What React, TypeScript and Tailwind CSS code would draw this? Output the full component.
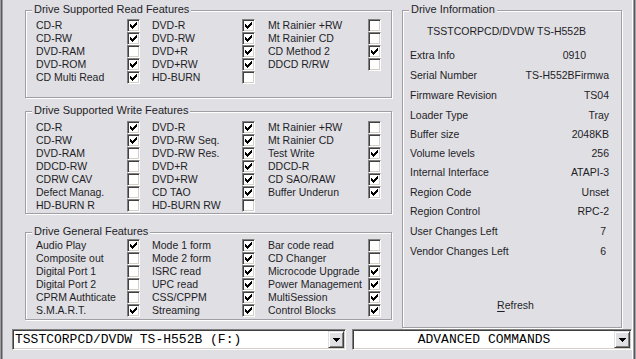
import React from 'react';

type Feature = [string, boolean];

const readFeatures: Feature[][] = [
  [['CD-R', true], ['DVD-R', true], ['Mt Rainier +RW', false]],
  [['CD-RW', true], ['DVD-RW', true], ['Mt Rainier CD', false]],
  [['DVD-RAM', false], ['DVD+R', true], ['CD Method 2', true]],
  [['DVD-ROM', true], ['DVD+RW', true], ['DDCD R/RW', false]],
  [['CD Multi Read', true], ['HD-BURN', false]],
];

const writeFeatures: Feature[][] = [
  [['CD-R', true], ['DVD-R', true], ['Mt Rainier +RW', false]],
  [['CD-RW', true], ['DVD-RW Seq.', true], ['Mt Rainier CD', false]],
  [['DVD-RAM', false], ['DVD-RW Res.', true], ['Test Write', true]],
  [['DDCD-RW', false], ['DVD+R', true], ['DDCD-R', false]],
  [['CDRW CAV', false], ['DVD+RW', true], ['CD SAO/RAW', true]],
  [['Defect Manag.', false], ['CD TAO', true], ['Buffer Underun', true]],
  [['HD-BURN R', false], ['HD-BURN RW', false]],
];

const generalFeatures: Feature[][] = [
  [['Audio Play', true], ['Mode 1 form', true], ['Bar code read', false]],
  [['Composite out', false], ['Mode 2 form', true], ['CD Changer', false]],
  [['Digital Port 1', false], ['ISRC read', true], ['Microcode Upgrade', true]],
  [['Digital Port 2', false], ['UPC read', true], ['Power Management', true]],
  [['CPRM Authticate', false], ['CSS/CPPM', true], ['MultiSession', true]],
  [['S.M.A.R.T.', true], ['Streaming', true], ['Control Blocks', true]],
];

// label, value, row height class, extra value padding
const driveInfo: [string, string, string, string][] = [
  ['Extra Info', '0910', 'h-[21px]', 'pr-[23px]'],
  ['Serial Number', 'TS-H552BFirmwa', 'h-[20px]', ''],
  ['Firmware Revision', 'TS04', 'h-[20px]', ''],
  ['Loader Type', 'Tray', 'h-[19px]', ''],
  ['Buffer size', '2048KB', 'h-[19px]', ''],
  ['Volume levels', '256', 'h-[19px]', ''],
  ['Internal Interface', 'ATAPI-3', 'h-[20px]', ''],
  ['Region Code', 'Unset', 'h-[19px]', ''],
  ['Region Control', 'RPC-2', 'h-[20px]', ''],
  ['User Changes Left', '7', 'h-[20px]', 'pr-[3px]'],
  ['Vendor Changes Left', '6', 'h-[20px]', 'pr-[3px]'],
];

const font = "font-['Liberation_Sans',Arial,sans-serif]";
const sunken =
  'border border-t-[#808080] border-l-[#808080] border-r-white border-b-white shadow-[inset_1px_1px_0_#404040,inset_-1px_-1px_0_#d4d0c8]';
const etched = 'border border-[#a0a0a4] shadow-[inset_1px_1px_0_#fff,1px_1px_0_#fff]';

const CheckBox: React.FC<{ checked: boolean }> = ({ checked }) => (
  <div className={`relative w-[13px] h-[13px] bg-white ${sunken}`}>
    {checked && (
      <svg className="absolute left-[2px] top-[2px]" width="7" height="7" viewBox="0 0 7 7" shapeRendering="crispEdges">
        {[[0, 2], [1, 3], [2, 4], [3, 3], [4, 2], [5, 1], [6, 0]].map(([x, y]) => (
          <rect key={x} x={x} y={y} width="1" height="3" fill="#000" />
        ))}
      </svg>
    )}
  </div>
);

const GroupBox: React.FC<{ title: string; className: string; children: React.ReactNode }> = ({
  title,
  className,
  children,
}) => (
  <div className={`relative ${etched} ${className}`}>
    <span className="absolute left-[6px] -top-[8px] px-[2px] bg-[#e0dfe3] text-[11px] leading-[13px] text-[#1e1e28]">
      {title}
    </span>
    {children}
  </div>
);

const FeatureGrid: React.FC<{ rows: Feature[][] }> = ({ rows }) => (
  <div className="pl-[10px] text-[10.5px] leading-[13px] text-[#1e1e28]">
    {rows.map((row, i) => (
      <div key={i} className="grid grid-cols-[91px_25px_90px_26px_100px_13px] h-[13px] items-center">
        {row.map(([label, checked]) => (
          <React.Fragment key={label}>
            <span className="whitespace-nowrap">{label}</span>
            <CheckBox checked={checked} />
          </React.Fragment>
        ))}
      </div>
    ))}
  </div>
);

const ComboBox: React.FC<{ text: string; className: string; center?: boolean }> = ({ text, className, center }) => (
  <div className={`flex h-[21px] bg-white p-[1px] ${sunken} ${className}`}>
    <div
      className={`flex-1 flex items-center font-['Liberation_Mono','Courier_New',monospace] text-[13px] text-black whitespace-pre ${
        center ? 'justify-center' : 'pl-[1px]'
      }`}
    >
      {text}
    </div>
    <div className="w-[16px] h-full flex items-center justify-center bg-[#e0dfe3] border border-t-[#e0dfe3] border-l-[#e0dfe3] border-r-[#404040] border-b-[#404040] shadow-[inset_1px_1px_0_#fff,inset_-1px_-1px_0_#808080]">
      <svg width="7" height="4" viewBox="0 0 7 4" shapeRendering="crispEdges">
        <rect x="0" y="0" width="7" height="1" fill="#000" />
        <rect x="1" y="1" width="5" height="1" fill="#000" />
        <rect x="2" y="2" width="3" height="1" fill="#000" />
        <rect x="3" y="3" width="1" height="1" fill="#000" />
      </svg>
    </div>
  </div>
);

export default function App() {
  return (
    <div className={`flex w-[636px] h-[359px] bg-[#e0dfe3] overflow-hidden ${font}`}>
      <div className="w-[3px] h-full bg-[#5a5a5e] border-l border-l-[#9d9da1] border-r border-r-[#9d9da1]" />

      <div className="flex flex-col w-[629px]">
        <div className="flex pt-[10px] pl-[22px] gap-[10px]">
          <div className="flex flex-col w-[367px]">
            <GroupBox title="Drive Supported Read Features" className="h-[88px] pt-[8px]">
              <FeatureGrid rows={readFeatures} />
            </GroupBox>
            <GroupBox title="Drive Supported Write Features" className="h-[103px] mt-[13px] pt-[9px]">
              <FeatureGrid rows={writeFeatures} />
            </GroupBox>
            <GroupBox title="Drive General Features" className="h-[88px] mt-[18px] pt-[6px]">
              <FeatureGrid rows={generalFeatures} />
            </GroupBox>
          </div>

          <GroupBox title="Drive Information" className="w-[220px] h-[318px] pt-[13px]">
            <div className="flex flex-col text-[10.5px] text-[#1e1e28]">
              <div className="h-[14px] leading-[14px] text-center pr-[11px]">TSSTCORPCD/DVDW TS-H552B</div>
              <div className="mt-[7px] pl-[7px] pr-[12px]">
                {driveInfo.map(([label, value, h, pad]) => (
                  <div key={label} className={`flex items-center justify-between ${h}`}>
                    <span>{label}</span>
                    <span className={pad}>{value}</span>
                  </div>
                ))}
              </div>
              <div className="mt-[36px] h-[14px] leading-[14px] text-center pl-[7px]">
                <span className="underline underline-offset-[2px]">R</span>efresh
              </div>
            </div>
          </GroupBox>
        </div>

        <div className="flex mt-[1px] pl-[9px] gap-[6px]">
          <ComboBox text="TSSTCORPCD/DVDW TS-H552B (F:)" className="w-[334px]" />
          <ComboBox text="ADVANCED COMMANDS" className="w-[280px]" center />
        </div>
      </div>

      <div className="w-[4px] h-full bg-[#a0a0a4] border-l border-l-white border-r border-r-[#a0a0a4] shadow-[inset_-1px_0_0_#5a5a5e]" />
    </div>
  );
}
